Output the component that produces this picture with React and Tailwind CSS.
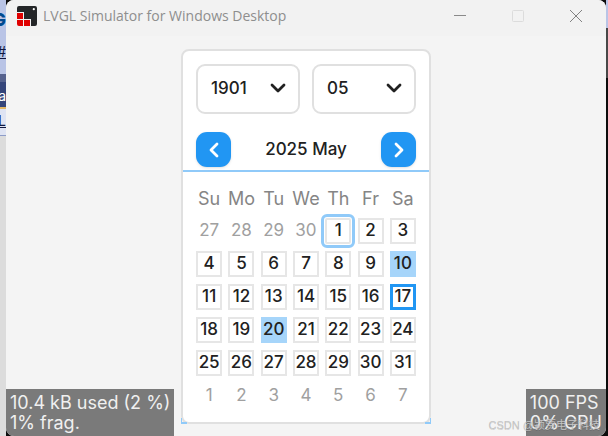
import { LuChevronDown, LuChevronLeft, LuChevronRight } from 'react-icons/lu';
import { clsx } from 'clsx';

const weekdays = ['Su', 'Mo', 'Tu', 'We', 'Th', 'Fr', 'Sa'];

const weeks = [
  [27, 28, 29, 30, 1, 2, 3],
  [4, 5, 6, 7, 8, 9, 10],
  [11, 12, 13, 14, 15, 16, 17],
  [18, 19, 20, 21, 22, 23, 24],
  [25, 26, 27, 28, 29, 30, 31],
  [1, 2, 3, 4, 5, 6, 7],
];

const highlighted = [10, 20];
const today = 17;
const focused = 1;

const Logo = () => (
  <svg className="h-5 w-5" viewBox="0 0 20 20" aria-hidden="true">
    <path d="M2 0h16a2 2 0 0 1 2 2v16a2 2 0 0 1-2 2h-4v-7H7V6H0V2a2 2 0 0 1 2-2z" fill="#242628" />
    <circle cx="16.8" cy="3.2" r="1.1" fill="#fff" />
    <path d="M0 7h6v6H0zM0 14h6v6H2a2 2 0 0 1-2-2zM7 14h6v6H7z" fill="#e00000" />
  </svg>
);

const TitleBar = () => (
  <header className="flex h-9 items-center justify-between bg-[#f2f2f2] pr-px pb-1 pl-[11px]">
    <div className="flex items-center gap-1.5">
      <Logo />
      <h1 className="font-['Open_Sans',sans-serif] text-sm text-[#8e8e8e]">
        LVGL Simulator for Windows Desktop
      </h1>
    </div>
    <div className="flex">
      <button aria-label="Minimize" className="flex w-[58px] justify-center">
        <svg className="h-3 w-3" viewBox="0 0 12 12">
          <path d="M0 5.5h12" stroke="#8a8a8a" />
        </svg>
      </button>
      <button aria-label="Maximize" disabled className="flex w-[58px] justify-center">
        <svg className="h-3 w-3" viewBox="0 0 12 12" fill="none">
          <rect x="0.5" y="0.5" width="11" height="11" rx="1" stroke="#dcdcdc" />
        </svg>
      </button>
      <button aria-label="Close" className="flex w-[58px] justify-center">
        <svg className="h-3 w-3" viewBox="0 0 12 12">
          <path d="M0 0l12 12M12 0L0 12" stroke="#828282" />
        </svg>
      </button>
    </div>
  </header>
);

const Dropdown = ({ label, options }) => (
  <label className="relative flex-1">
    <span className="sr-only">{label}</span>
    <select className="h-[50px] w-full appearance-none rounded-[9px] border-2 border-[#e0e0e0] bg-white pl-[13px] font-medium text-[#212121]">
      {options.map((option) => (
        <option key={option}>{option}</option>
      ))}
    </select>
    <LuChevronDown
      className="pointer-events-none absolute top-3 right-2.5 h-6 w-6 text-[#212121]"
      strokeWidth={2.8}
    />
  </label>
);

const Day = ({ day, outside }) => (
  <button
    className={clsx(
      'mx-auto flex h-[26px] w-[26px] items-center justify-center',
      outside && 'text-[#a0a0a0]',
      !outside && 'font-medium',
      !outside && day !== today && !highlighted.includes(day) && 'border-2 border-[#e6e6e6]',
      !outside && highlighted.includes(day) && 'bg-[#a6d5fa]',
      !outside && day === today && 'border-3 border-[#2196f3]',
      !outside && day === focused && 'rounded-xs outline-3 outline-offset-1 outline-[#90caf9]',
    )}
  >
    {day}
  </button>
);

const Calendar = () => (
  <section className="relative w-[250px] rounded-lg border-2 border-[#e0e0e0] bg-white text-[#212121]">
    <div className="flex gap-3 px-[13px] pt-[13px]">
      <Dropdown label="Year" options={['1901', '2025']} />
      <Dropdown label="Month" options={['05', '06']} />
    </div>
    <div className="mt-[18px] flex items-center justify-between border-b-2 border-[#90caf9] px-[13px] pb-[3px]">
      <button
        aria-label="Previous month"
        className="flex h-[35px] w-[35px] items-center justify-center rounded-[11px] bg-[#2196f3] text-white shadow-sm"
      >
        <LuChevronLeft className="h-6 w-6" strokeWidth={2.8} />
      </button>
      <h2 className="font-medium">2025 May</h2>
      <button
        aria-label="Next month"
        className="flex h-[35px] w-[35px] items-center justify-center rounded-[11px] bg-[#2196f3] text-white shadow-sm"
      >
        <LuChevronRight className="h-6 w-6" strokeWidth={2.8} />
      </button>
    </div>
    <div className="px-2.5 pt-[11px] pb-2.5">
      <table className="w-full table-fixed">
        <thead>
          <tr className="h-[31px]">
            {weekdays.map((name) => (
              <th key={name} className="p-0 text-lg font-normal text-[#858585]">
                {name}
              </th>
            ))}
          </tr>
        </thead>
        <tbody>
          {weeks.map((week, row) => (
            <tr key={row} className="h-[33px]">
              {week.map((day) => (
                <td key={day} className="p-0">
                  <Day day={day} outside={(row === 0 && day > 7) || row === 5} />
                </td>
              ))}
            </tr>
          ))}
        </tbody>
      </table>
    </div>
    <span className="absolute -bottom-0.5 -left-0.5 h-1.5 w-1.5 border-b-2 border-l border-[#90caf9]" />
    <span className="absolute -right-0.5 -bottom-0.5 h-1.5 w-1.5 border-r border-b-2 border-[#90caf9]" />
  </section>
);

const App = () => {
  return (
    <div className="relative flex min-h-screen overflow-hidden bg-[#0c0c0c] font-[Inter,sans-serif] text-[17px]">
      <div className="flex w-1.5 flex-col items-end overflow-hidden bg-[#dcdcdc] text-[#101840]">
        <div className="flex h-[74px] w-full flex-col items-end bg-[#b9c4e6]">
          <p className="mt-1.5 text-lg font-extrabold text-[#004a90]">G</p>
          <p className="mt-2 text-sm leading-5 underline">#</p>
        </div>
        <div className="h-2 w-full bg-[#56628e]" />
        <div className="flex h-[27px] w-full justify-end border-b-2 border-[#e3b766] bg-[#35457a]">
          <p className="text-sm leading-7 text-white">a</p>
        </div>
        <div className="flex h-[27px] w-full justify-end border-b border-[#8d9cc8] bg-[#dfe4f3]">
          <p className="text-sm leading-6 underline">L</p>
        </div>
      </div>
      <main className="z-10 flex flex-1 flex-col overflow-hidden rounded-lg bg-[#f4f4f4]">
        <TitleBar />
        <div className="flex justify-center pt-[13px]">
          <Calendar />
        </div>
      </main>
      <div className="w-0.5">
        <div className="h-7 bg-[#b9c4e6]" />
        <div className="h-[50px] bg-[#484848]" />
      </div>
      <p className="absolute bottom-0 left-1.5 z-20 rounded-bl-lg bg-[#7a7a7a] px-1 pt-1 pb-[3px] text-lg leading-5 text-[#f0f0f0]">
        10.4 kB used (2 %)
        <br />
        1% frag.
      </p>
      <p className="absolute right-0.5 bottom-0 z-20 rounded-br-lg bg-[#7a7a7a] px-1 pt-1 pb-[3px] text-lg leading-5 text-[#f0f0f0]">
        100 FPS
        <br />
        0% CPU
      </p>
      <p className="absolute right-2 bottom-[3px] z-30 font-['Liberation_Sans','Noto_Sans_CJK_SC',sans-serif] text-[11px] text-[#c4c4c4] text-shadow-2xs">
        CSDN @颍贾电子科技
      </p>
    </div>
  );
};

export default App;
